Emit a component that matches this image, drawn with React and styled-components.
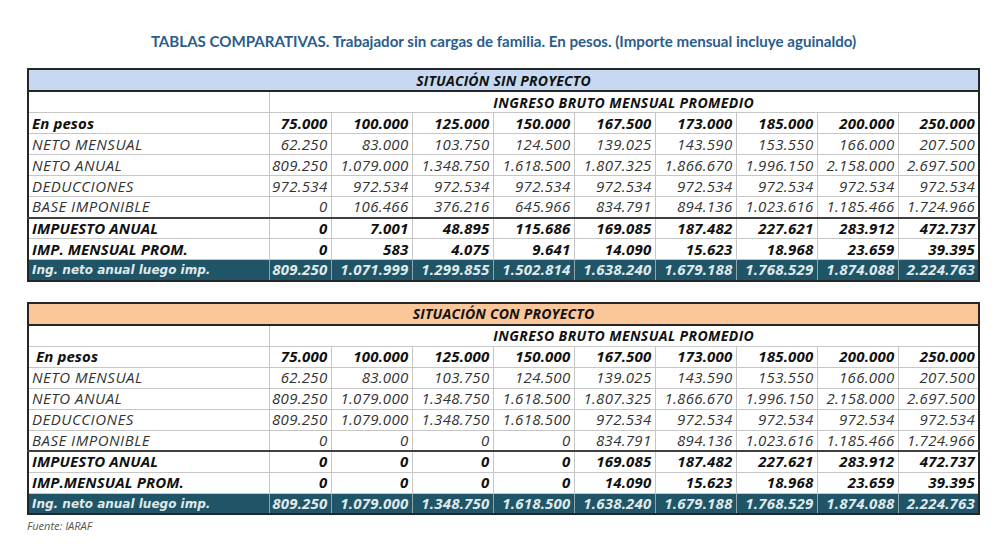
import React from 'react'
import styled, { createGlobalStyle } from 'styled-components'

const GlobalStyle = createGlobalStyle`
  html, body {
    margin: 0;
    padding: 0;
    background: #ffffff;
  }
  body {
    font-family: Lato, "Open Sans", "Liberation Sans", sans-serif;
  }
`

const cellFont = '"Open Sans", "Liberation Sans", sans-serif'

const cols = ['75.000', '100.000', '125.000', '150.000', '167.500', '173.000', '185.000', '200.000', '250.000']

const sinProyecto = [
  { label: 'NETO MENSUAL', values: ['62.250', '83.000', '103.750', '124.500', '139.025', '143.590', '153.550', '166.000', '207.500'] },
  { label: 'NETO ANUAL', values: ['809.250', '1.079.000', '1.348.750', '1.618.500', '1.807.325', '1.866.670', '1.996.150', '2.158.000', '2.697.500'] },
  { label: 'DEDUCCIONES', values: ['972.534', '972.534', '972.534', '972.534', '972.534', '972.534', '972.534', '972.534', '972.534'] },
  { label: 'BASE IMPONIBLE', values: ['0', '106.466', '376.216', '645.966', '834.791', '894.136', '1.023.616', '1.185.466', '1.724.966'] },
  { label: 'IMPUESTO ANUAL', kind: 'strong', split: true, values: ['0', '7.001', '48.895', '115.686', '169.085', '187.482', '227.621', '283.912', '472.737'] },
  { label: 'IMP. MENSUAL PROM.', kind: 'strong', values: ['0', '583', '4.075', '9.641', '14.090', '15.623', '18.968', '23.659', '39.395'] },
  { label: 'Ing. neto anual luego imp.', kind: 'total', values: ['809.250', '1.071.999', '1.299.855', '1.502.814', '1.638.240', '1.679.188', '1.768.529', '1.874.088', '2.224.763'] },
]

const conProyecto = [
  { label: 'NETO MENSUAL', values: ['62.250', '83.000', '103.750', '124.500', '139.025', '143.590', '153.550', '166.000', '207.500'] },
  { label: 'NETO ANUAL', values: ['809.250', '1.079.000', '1.348.750', '1.618.500', '1.807.325', '1.866.670', '1.996.150', '2.158.000', '2.697.500'] },
  { label: 'DEDUCCIONES', values: ['809.250', '1.079.000', '1.348.750', '1.618.500', '972.534', '972.534', '972.534', '972.534', '972.534'] },
  { label: 'BASE IMPONIBLE', values: ['0', '0', '0', '0', '834.791', '894.136', '1.023.616', '1.185.466', '1.724.966'] },
  { label: 'IMPUESTO ANUAL', kind: 'strong', split: true, values: ['0', '0', '0', '0', '169.085', '187.482', '227.621', '283.912', '472.737'] },
  { label: 'IMP.MENSUAL PROM.', kind: 'strong', values: ['0', '0', '0', '0', '14.090', '15.623', '18.968', '23.659', '39.395'] },
  { label: 'Ing. neto anual luego imp.', kind: 'total', values: ['809.250', '1.079.000', '1.348.750', '1.618.500', '1.638.240', '1.679.188', '1.768.529', '1.874.088', '2.224.763'] },
]

const Page = styled.div`
  width: 953px;
  padding: 32px 0 0 27px;
  display: flex;
  flex-direction: column;
`

const Title = styled.h1`
  margin: 0 0 17px;
  text-align: center;
  font-size: 15.1px;
  line-height: 19px;
  font-weight: 700;
  color: #2b5d8c;
`

const Sheet = styled.table`
  width: 953px;
  table-layout: fixed;
  border-collapse: collapse;
  border: 2px solid #262626;
  margin-bottom: ${p => p.$gap || 0}px;
`

const Caption = styled.td`
  height: 20px;
  padding: 0;
  line-height: 19px;
  text-align: center;
  font-family: ${cellFont};
  font-style: italic;
  font-weight: 700;
  font-size: 14px;
  letter-spacing: 0.2px;
  color: #111;
  background: ${p => p.$tone};
  border-bottom: 2px solid #262626;
`

const Group = styled.td`
  height: 20px;
  padding: 0;
  line-height: 19px;
  text-align: center;
  font-family: ${cellFont};
  font-style: italic;
  font-weight: 700;
  font-size: 14px;
  letter-spacing: 0.4px;
  color: #111;
  border: 1px solid #c6c6c6;
`

const Row = styled.tr`
  height: 21px;
  background: ${p => (p.$kind === 'total' ? '#1f5567' : '#ffffff')};
  border-top: ${p => (p.$split ? '2px solid #404040' : 'none')};
`

const tone = kind => (kind === 'total' ? '#dfe9ec' : kind === 'plain' ? '#333' : '#111')
const weight = kind => (kind === 'plain' ? 500 : 700)

const Label = styled.td`
  padding: ${p => (p.$kind === 'total' ? '2px 3px 0' : '0 3px')};
  line-height: 19px;
  text-align: left;
  white-space: nowrap;
  overflow: hidden;
  border: 1px solid #c6c6c6;
  font-family: ${p => (p.$kind === 'total' ? '"DejaVu Sans", Verdana, sans-serif' : cellFont)};
  font-size: ${p => (p.$kind === 'total' ? '12px' : '15px')};
  letter-spacing: ${p => (p.$kind === 'total' ? '0' : p.$kind === 'plain' ? '0.5px' : '0.1px')};
  font-style: italic;
  font-weight: ${p => weight(p.$kind)};
  color: ${p => tone(p.$kind)};
  ${p => p.$kind === 'total' && 'line-height: 17px; border-color: #1f5567; border-right-color: #8ea7ae;'}
`

const Num = styled.td`
  padding: 0 3px 0 0;
  line-height: 19px;
  text-align: right;
  white-space: nowrap;
  border: 1px solid #c6c6c6;
  font-family: ${cellFont};
  font-size: 15px;
  letter-spacing: ${p => (p.$kind === 'plain' ? '0.3px' : '0.2px')};
  font-style: italic;
  font-weight: ${p => weight(p.$kind)};
  color: ${p => tone(p.$kind)};
  ${p => p.$kind === 'total' && 'border-color: #1f5567; border-left-color: #8ea7ae; border-right-color: #8ea7ae;'}
`

const Source = styled.div`
  margin-top: 3px;
  font-family: ${cellFont};
  font-size: 11px;
  font-style: italic;
  color: #555;
`

const Comparativa = ({ title, tone, rows, headLabel, gap }) => (
  <Sheet $gap={gap}>
    <colgroup>
      <col style={{ width: 241 }} />
      <col style={{ width: 62 }} />
      {cols.slice(1).map(c => <col key={c} />)}
    </colgroup>
    <tbody>
      <tr>
        <Caption colSpan={10} $tone={tone}>{title}</Caption>
      </tr>
      <tr>
        <Group />
        <Group colSpan={9}>INGRESO BRUTO MENSUAL PROMEDIO</Group>
      </tr>
      <Row>
        <Label $kind="strong">{headLabel}</Label>
        {cols.map(c => <Num key={c} $kind="strong">{c}</Num>)}
      </Row>
      {rows.map(r => {
        const kind = r.kind || 'plain'
        return (
          <Row key={r.label} $kind={kind} $split={r.split}>
            <Label $kind={kind}>{r.label}</Label>
            {r.values.map((v, i) => <Num key={i} $kind={kind}>{v}</Num>)}
          </Row>
        )
      })}
    </tbody>
  </Sheet>
)

export default function App() {
  return (
    <>
      <GlobalStyle />
      <Page>
        <Title>TABLAS COMPARATIVAS. Trabajador sin cargas de familia. En pesos. (Importe mensual incluye aguinaldo)</Title>
        <Comparativa title="SITUACIÓN SIN PROYECTO" tone="#c6d9f0" rows={sinProyecto} headLabel="En pesos" gap={20} />
        <Comparativa title="SITUACIÓN CON PROYECTO" tone="#fbc69a" rows={conProyecto} headLabel={'\u00a0En pesos'} />
        <Source>Fuente: IARAF</Source>
      </Page>
    </>
  )
}
